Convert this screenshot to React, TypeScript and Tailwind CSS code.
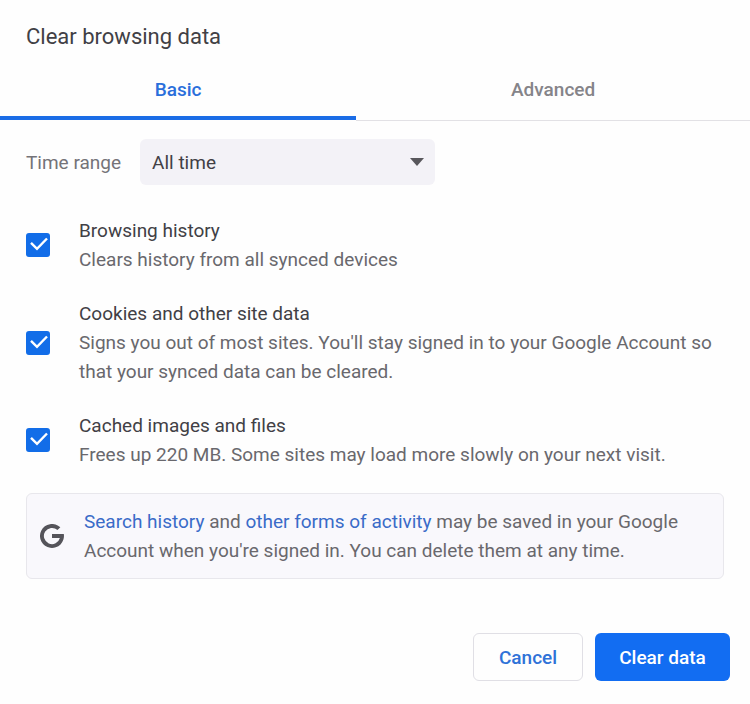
import { useState } from "react";

const items = [
  {
    id: "history",
    title: "Browsing history",
    detail: "Clears history from all synced devices",
  },
  {
    id: "cookies",
    title: "Cookies and other site data",
    detail:
      "Signs you out of most sites. You'll stay signed in to your Google Account so that your synced data can be cleared.",
  },
  {
    id: "cache",
    title: "Cached images and files",
    detail: "Frees up 220 MB. Some sites may load more slowly on your next visit.",
  },
];

function DataOption({ id, title, detail }: { id: string; title: string; detail: string }) {
  const [checked, setChecked] = useState(true);

  return (
    <div className="flex items-center gap-[29px]">
      <span className="relative h-6 w-6 shrink-0">
        <input
          id={id}
          type="checkbox"
          checked={checked}
          onChange={(e) => setChecked(e.target.checked)}
          className="peer block h-6 w-6 appearance-none rounded-[3px] border-2 border-[#5f6368] checked:border-[#126de8] checked:bg-[#126de8]"
        />
        <svg
          viewBox="0 0 24 24"
          fill="none"
          stroke="white"
          strokeWidth="2.4"
          className="pointer-events-none absolute inset-0 hidden h-6 w-6 peer-checked:block"
        >
          <path d="M5 9.8 L11 15.8 L21 5.5" />
        </svg>
      </span>
      <label htmlFor={id} className="block">
        <span className="block text-[#414045]">{title}</span>
        <span className="block text-[#69686d]">{detail}</span>
      </label>
    </div>
  );
}

export default function App() {
  const [tab, setTab] = useState("basic");

  const tabClass = (name: string) =>
    tab === name
      ? "h-[60px] border-b-4 border-[#1a6ce6] pt-0.5 font-medium text-[#2a6fdb]"
      : "h-[61px] border-b border-[#e2e1e5] pb-0.5 font-medium text-[#858489]";

  return (
    <main className="bg-[#fefefe] pt-[21px] pb-[23px] font-[Roboto,sans-serif] text-[19px] leading-[29px]">
      <h1 className="px-[26px] text-[22px] leading-8 text-[#414045]">Clear browsing data</h1>

      <div role="tablist" className="mt-[7px] grid grid-cols-[19fr_21fr] items-start">
        <button role="tab" aria-selected={tab === "basic"} onClick={() => setTab("basic")} className={tabClass("basic")}>
          Basic
        </button>
        <button role="tab" aria-selected={tab === "advanced"} onClick={() => setTab("advanced")} className={tabClass("advanced")}>
          Advanced
        </button>
      </div>

      <div className="px-[26px]">
        <div className="mt-[18px] flex items-center gap-[19px]">
          <label htmlFor="range" className="text-[#747378]">
            Time range
          </label>
          <div className="relative w-[295px]">
            <select
              id="range"
              defaultValue="All time"
              className="block h-[46px] w-full appearance-none rounded-md bg-[#f3f2f7] px-3 text-[#414045]"
            >
              <option>Last hour</option>
              <option>Last 24 hours</option>
              <option>Last 7 days</option>
              <option>Last 4 weeks</option>
              <option>All time</option>
            </select>
            <svg viewBox="0 0 14 8" fill="#58575c" className="pointer-events-none absolute top-[19px] right-[11px] h-2 w-3.5">
              <path d="M0 0h14L7 8z" />
            </svg>
          </div>
        </div>

        <div className="mt-[31px] flex flex-col gap-[25px]">
          {items.map((item) => (
            <DataOption key={item.id} {...item} />
          ))}
        </div>

        <div className="mt-6 flex items-center gap-5 rounded-md border border-[#e8e7ec] bg-[#f9f8fc] px-[13px] py-[13px]">
          <svg viewBox="4 4 40 40" fill="#55545a" className="h-6 w-6 shrink-0">
            <path d="M43.7 20.7H24v6.6h13.1A13.5 13.5 0 1 1 33.1 14l4.8-4.4A20 20 0 1 0 43.7 20.7z" />
          </svg>
          <p className="text-[#69686d]">
            <a href="#search" className="text-[#3a6bc8]">Search history</a> and{" "}
            <a href="#activity" className="text-[#3a6bc8]">other forms of activity</a> may be saved in your Google
            Account when you're signed in. You can delete them at any time.
          </p>
        </div>
      </div>

      <div className="mt-[54px] flex justify-end gap-3 px-5">
        <button className="h-12 w-[110px] rounded-md border border-[#e0dfe5] font-medium text-[#2f72d8]">Cancel</button>
        <button className="h-12 w-[135px] rounded-md bg-[#126df2] font-medium text-white">Clear data</button>
      </div>
    </main>
  );
}
